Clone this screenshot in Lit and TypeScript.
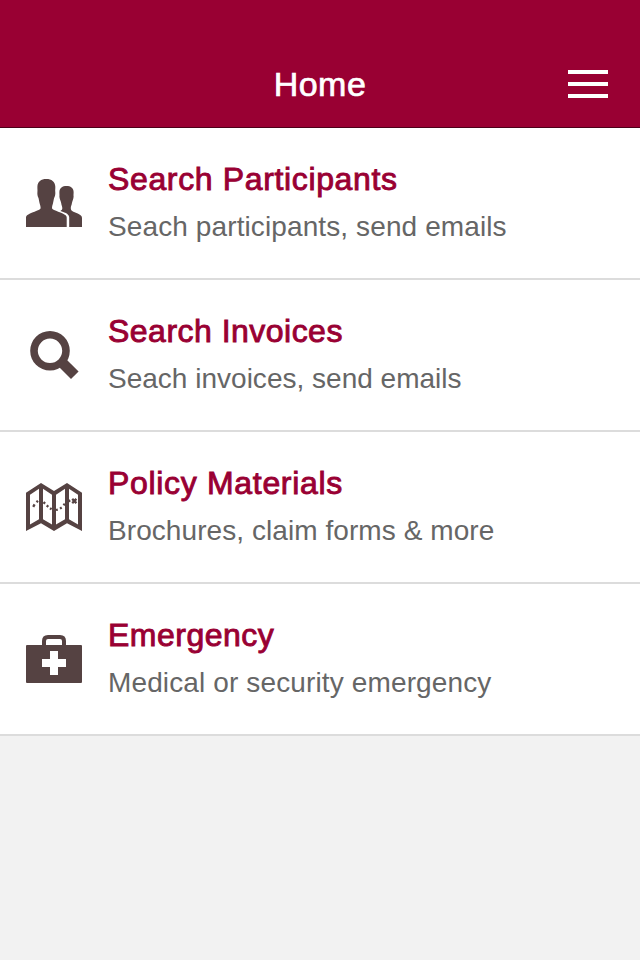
import { LitElement, html, svg, css } from "lit";
import { customElement } from "lit/decorators.js";

const people = svg`
  <path d="M0 48V38.6C0 37 1.5 35.8 4 34.6C7 33.3 10.2 32.1 12.6 31.1C14.1 30.4 14.6 29.8 14.6 28.8C14.6 27.4 14.3 26.4 13.8 24.9C13.2 22.8 13 21.2 12.5 19C11.6 17.4 11.2 15.4 11.4 13.2C11.7 11.5 11.3 10 11.4 7.6C11.6 2.6 15 0 20.3 0S29 2.6 29.3 7.6C29.4 10 29 11.5 29.3 13.2C29.5 15.4 29 17.4 28.1 19C27.6 21.2 27.4 22.8 26.8 24.9C26.3 26.4 26 27.4 26 28.8C26 29.8 26.6 30.4 28.1 31.1C30.5 32.1 33.7 33.3 36.7 34.6C39.2 35.8 40.7 37 40.7 38.6V48Z"/>
  <path d="M43.2 48V38.3C43.2 35.6 40.5 33.7 34.4 31.9C35.8 31.2 36.4 30.4 36.3 29C36.2 27.4 35.5 26.6 35.2 24.3C35 22.3 33.4 20 33.4 17.5C33.6 15.6 33.3 14.4 33.4 12.7C33.7 8.8 36.4 7 40.5 7S47.4 8.8 47.6 12.7C47.7 14.4 47.4 15.6 47.6 17.5C47.6 20 46.2 22.3 45.9 24.3C45.6 26.6 44.8 27.4 44.8 29C44.7 31.1 45.5 32 47.4 32.7L51.7 34.6C54.4 35.8 56 37 56 39V48Z"/>`;

const magnifier = svg`
  <path fill-rule="evenodd" d="M24 0A19.8 19.8 0 1 1 24 39.6A19.8 19.8 0 1 1 24 0ZM24 7.6A12.2 12.2 0 1 0 24 32A12.2 12.2 0 1 0 24 7.6Z"/>
  <path d="M33.5 36.5L41 29.1L52.6 40.6L45 48Z"/>`;

const map = svg`
  <path fill-rule="evenodd" d="M0 9.8L15 0L28 8L41 0L56 9.8V48L41 40.3L28 48L15 40.3L0 48ZM4 11.7V41.6L13 36.2V5.8ZM17 5.8V36.2L26 41.6V11.7ZM30 11.7V41.6L39 36.2V5.8ZM43 5.8V36.2L52 41.6V11.7Z"/>
  <path class="trail" d="M7.2 23.8L8.6 21.4M10.5 19.2L12 17.8M17.5 19.2L19.1 20.7M20.7 22.4L22.3 23.8M24 25.2L25.6 26.3M30 27L31.8 26.6M34 25.6L35.7 24.5M37.5 22.2L38.8 20.8M42.3 18.6L44.2 17.3"/>
  <path class="trail" d="M46.2 15.9L50.4 20.1M50.4 15.9L46.2 20.1"/>`;

const medkit = svg`
  <path class="handle" d="M18 11V6Q18 2 22 2H34Q38 2 38 6V11"/>
  <path fill-rule="evenodd" d="M1 10H55Q56 10 56 11V47Q56 48 55 48H1Q0 48 0 47V11Q0 10 1 10ZM24 16V24H16V32H24V40H32V32H40V24H32V16Z"/>`;

const items = [
  { icon: people, title: "Search Participants", note: "Seach participants, send emails", ts: 0.64, ns: 0.11 },
  { icon: magnifier, title: "Search Invoices", note: "Seach invoices, send emails", ts: 0.48, ns: 0.01 },
  { icon: map, title: "Policy Materials", note: "Brochures, claim forms & more", ts: 0.68, ns: 0.07 },
  { icon: medkit, title: "Emergency", note: "Medical or security emergency", ts: 0.5, ns: 0.13 },
];

@customElement("app-root")
export class AppRoot extends LitElement {
  static styles = css`
    :host {
      display: block;
      height: 960px;
      background: #f2f2f2;
      font-family: "Liberation Sans", Arial, sans-serif;
    }
    .bar {
      box-sizing: border-box;
      height: 128px;
      padding: 41px 32px 0;
      display: grid;
      grid-template-columns: 40px 1fr 40px;
      align-items: center;
      background: #990033;
      border-bottom: 1px solid #4d001a;
      color: #fff;
    }
    h1 {
      grid-column: 2;
      margin: 0;
      text-align: center;
      font-size: 34px;
      line-height: 40px;
      font-weight: 400;
      letter-spacing: 0.5px;
      -webkit-text-stroke: 0.7px currentColor;
    }
    .menu {
      display: flex;
      flex-direction: column;
      gap: 8px;
      padding: 0;
      border: 0;
      background: none;
    }
    .menu span { height: 4px; width: 40px; background: #fff; }
    ul { list-style: none; margin: 0; padding: 0; }
    .row {
      box-sizing: border-box;
      height: 152px;
      padding: 0 26px;
      display: flex;
      align-items: center;
      gap: 26px;
      background: #fff;
      border-bottom: 2px solid #dcdcdc;
    }
    .icon { width: 56px; height: 48px; flex: none; fill: #554242; }
    .trail, .handle { fill: none; stroke: #554242; }
    .trail { stroke-width: 2.3; }
    .handle { stroke-width: 4; }
    .text { white-space: nowrap; }
    h2 {
      margin: 0;
      font-size: 32px;
      line-height: 48px;
      font-weight: 400;
      color: #990033;
      -webkit-text-stroke: 0.9px currentColor;
    }
    p { margin: 0; font-size: 28px; line-height: 48px; color: #666; }
  `;

  render() {
    return html`
      <header class="bar">
        <h1>Home</h1>
        <button class="menu" aria-label="Menu"><span></span><span></span><span></span></button>
      </header>
      <ul>
        ${items.map(
          (item) => html`<li class="row">
            <svg class="icon" viewBox="0 0 56 48" aria-hidden="true">${item.icon}</svg>
            <div class="text">
              <h2 style="letter-spacing:${item.ts}px">${item.title}</h2>
              <p style="letter-spacing:${item.ns}px">${item.note}</p>
            </div>
          </li>`
        )}
      </ul>
    `;
  }
}
